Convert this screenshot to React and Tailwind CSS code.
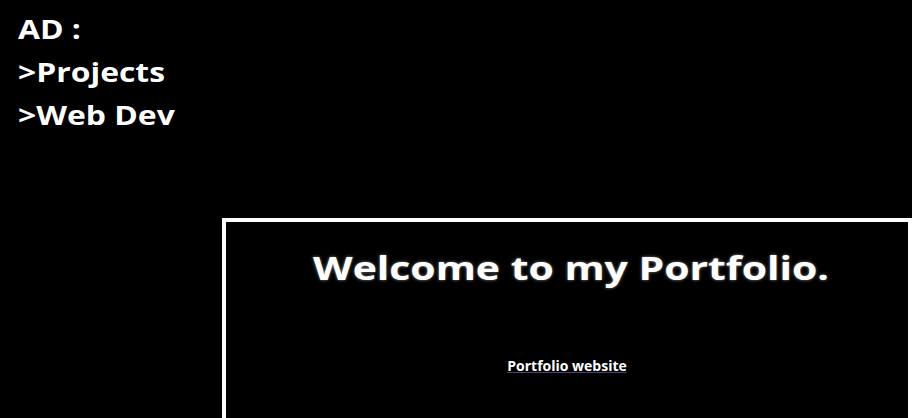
export default function App() {
  return (
    <div className="min-h-[418px] bg-black text-white font-['Open_Sans',sans-serif] overflow-hidden">
      <div className="pl-[18px] pt-[7px] text-[27px] font-bold leading-[43px]">
        <p><span className="inline-block origin-left scale-x-[1.18]">AD :</span></p>
        <p><span className="inline-block origin-left scale-x-[1.18]">&gt;Projects</span></p>
        <p><span className="inline-block origin-left scale-x-[1.18]">&gt;Web Dev</span></p>
      </div>

      <div className="ml-[222px] mt-[82px] h-[260px] border-4 border-white">
        <h1 className="pt-[21px] text-center text-[33px] font-bold leading-[50px]">
          <span className="inline-block translate-x-[4px] scale-x-[1.24] [text-shadow:0_0_3px_rgba(255,255,255,0.5)]">
            Welcome to my Portfolio.
          </span>
        </h1>
        <div className="mt-[60px] text-center">
          <a href="#" className="text-[14px] font-bold underline decoration-[#5b3a78]">
            Portfolio website
          </a>
        </div>
      </div>
    </div>
  );
}
